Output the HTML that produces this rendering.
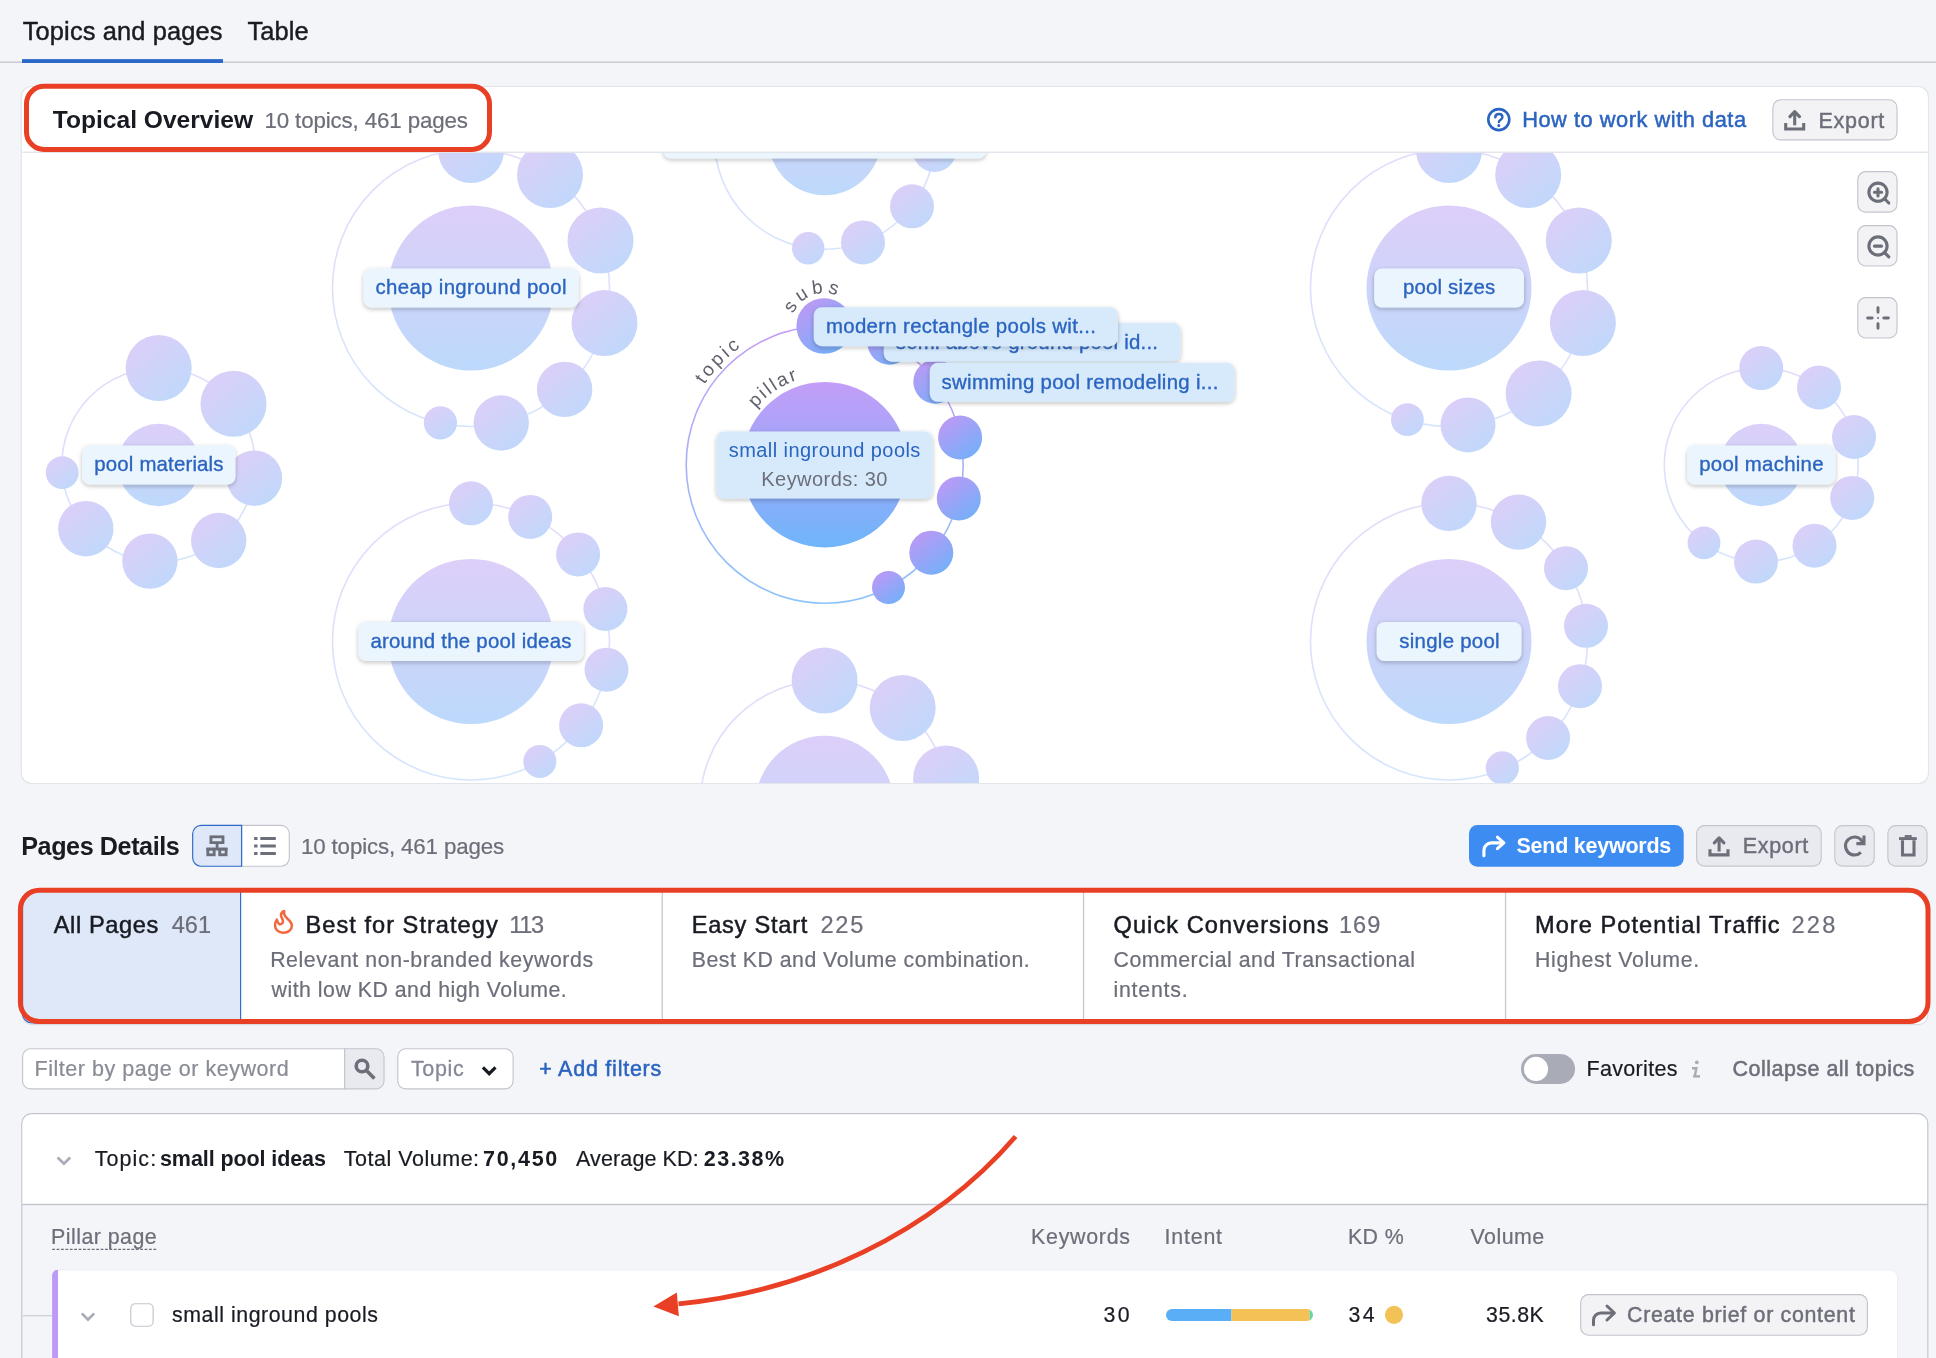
<!DOCTYPE html>
<html lang="en"><head><meta charset="utf-8"><title>Topics and pages</title>
<style>
html,body{margin:0;padding:0;}
body{background:#f4f5f9;font-family:"Liberation Sans",sans-serif;width:1936px;height:1358px;overflow:hidden;}
#page{position:relative;width:1936px;height:1358px;overflow:hidden;background:#f4f5f9;}
.abs{position:absolute;box-sizing:border-box;}
.t{position:absolute;white-space:pre;line-height:normal;font-family:"Liberation Sans",sans-serif;}
svg{position:absolute;overflow:visible;}
.chart{left:22px;top:153px;overflow:hidden;border-radius:0 0 10px 10px;will-change:transform;}

</style></head>
<body>
<div id="page">
<!-- tabs -->

<!-- overview card -->
<svg style="left:0;top:0" width="1936" height="1358" viewBox="0 0 1936 1358">
<rect x="0" y="61.5" width="1936" height="1.4" fill="#c4c7cf"/>
<rect x="22" y="59.1" width="201" height="3.9" fill="#2b68c8"/>
<path d="M31.70,86.50 H1918.10 A10.40,10.40 0 0 1 1928.50,96.90 V773.10 A10.40,10.40 0 0 1 1918.10,783.50 H31.70 A10.40,10.40 0 0 1 21.30,773.10 V96.90 A10.40,10.40 0 0 1 31.70,86.50 Z" fill="#fff" stroke="#e4e5eb" stroke-width="1.2" />
</svg>
<svg class="chart" width="1906" height="630" viewBox="22 153 1906 630" font-family="Liberation Sans, sans-serif">
<defs>
<linearGradient id="gMI" x1="0" y1="0" x2="0" y2="1"><stop offset="0" stop-color="#ddcff9"/><stop offset="1" stop-color="#bcd9fb"/></linearGradient>
<linearGradient id="gSI" x1="0.2" y1="0.1" x2="0.8" y2="0.9"><stop offset="0" stop-color="#dbcff8"/><stop offset="1" stop-color="#c1d8fb"/></linearGradient>
<linearGradient id="gOI" x1="0" y1="0" x2="0" y2="1"><stop offset="0" stop-color="#e3dcfb"/><stop offset="1" stop-color="#d6e5fc"/></linearGradient>
<linearGradient id="gMA" x1="0" y1="0" x2="0" y2="1"><stop offset="0" stop-color="#c39df8"/><stop offset="1" stop-color="#6fb5fa"/></linearGradient>
<linearGradient id="gSA" x1="0.2" y1="0.1" x2="0.8" y2="0.9"><stop offset="0" stop-color="#b99af5"/><stop offset="1" stop-color="#76aff9"/></linearGradient>
<linearGradient id="gOA" x1="0" y1="0" x2="0" y2="1"><stop offset="0" stop-color="#c39df8"/><stop offset="1" stop-color="#8cc4fa"/></linearGradient>
<filter id="sh" x="-10%" y="-30%" width="120%" height="170%"><feDropShadow dx="0" dy="1.5" stdDeviation="2" flood-color="#191b23" flood-opacity="0.28"/></filter>
</defs>
<circle cx="471" cy="288" r="138.5" fill="none" stroke="url(#gOI)" stroke-width="1.6"/>
<circle cx="471" cy="288" r="82.5" fill="url(#gMI)"/>
<circle cx="471" cy="150" r="33" fill="url(#gSI)"/>
<circle cx="550" cy="175" r="33" fill="url(#gSI)"/>
<circle cx="600.5" cy="240.5" r="33" fill="url(#gSI)"/>
<circle cx="604.5" cy="323" r="33" fill="url(#gSI)"/>
<circle cx="564.6" cy="389.4" r="27.7" fill="url(#gSI)"/>
<circle cx="501.2" cy="423" r="27.7" fill="url(#gSI)"/>
<circle cx="440.4" cy="422.8" r="16.6" fill="url(#gSI)"/>
<circle cx="158.5" cy="465" r="96.7" fill="none" stroke="url(#gOI)" stroke-width="1.6"/>
<circle cx="158.5" cy="465" r="41.2" fill="url(#gMI)"/>
<circle cx="158.7" cy="368.1" r="33" fill="url(#gSI)"/>
<circle cx="233.5" cy="403.8" r="33" fill="url(#gSI)"/>
<circle cx="254.4" cy="478.2" r="27.7" fill="url(#gSI)"/>
<circle cx="218.7" cy="540.5" r="27.7" fill="url(#gSI)"/>
<circle cx="149.9" cy="561.1" r="27.7" fill="url(#gSI)"/>
<circle cx="85.8" cy="528.7" r="27.7" fill="url(#gSI)"/>
<circle cx="62.2" cy="472.7" r="16.4" fill="url(#gSI)"/>
<circle cx="471" cy="641.5" r="138.5" fill="none" stroke="url(#gOI)" stroke-width="1.6"/>
<circle cx="471" cy="641.5" r="82.5" fill="url(#gMI)"/>
<circle cx="471" cy="503.3" r="22" fill="url(#gSI)"/>
<circle cx="530.2" cy="516.9" r="22" fill="url(#gSI)"/>
<circle cx="578.1" cy="554.4" r="22" fill="url(#gSI)"/>
<circle cx="605.4" cy="609" r="22" fill="url(#gSI)"/>
<circle cx="606.5" cy="669.7" r="22" fill="url(#gSI)"/>
<circle cx="581.1" cy="725.3" r="22" fill="url(#gSI)"/>
<circle cx="539.8" cy="761.4" r="16.5" fill="url(#gSI)"/>
<circle cx="824.7" cy="139" r="110.3" fill="none" stroke="url(#gOI)" stroke-width="1.6"/>
<circle cx="824.7" cy="139" r="56.2" fill="url(#gMI)"/>
<circle cx="808.2" cy="248.2" r="16.2" fill="url(#gSI)"/>
<circle cx="863" cy="242.4" r="22" fill="url(#gSI)"/>
<circle cx="912" cy="206.3" r="22" fill="url(#gSI)"/>
<circle cx="934.5" cy="149.9" r="22" fill="url(#gSI)"/>
<circle cx="824.65" cy="805" r="124.6" fill="none" stroke="url(#gOI)" stroke-width="1.6"/>
<circle cx="824.65" cy="805" r="69.3" fill="url(#gMI)"/>
<circle cx="824.6" cy="680.4" r="33" fill="url(#gSI)"/>
<circle cx="902.7" cy="708" r="33" fill="url(#gSI)"/>
<circle cx="946.1" cy="778.4" r="33" fill="url(#gSI)"/>
<circle cx="1449" cy="288" r="138.5" fill="none" stroke="url(#gOI)" stroke-width="1.6"/>
<circle cx="1449" cy="288" r="82.5" fill="url(#gMI)"/>
<circle cx="1449" cy="150" r="33" fill="url(#gSI)"/>
<circle cx="1528.2" cy="174.9" r="33" fill="url(#gSI)"/>
<circle cx="1578.8" cy="240.4" r="33" fill="url(#gSI)"/>
<circle cx="1582.9" cy="323.1" r="33" fill="url(#gSI)"/>
<circle cx="1538.6" cy="393.4" r="33" fill="url(#gSI)"/>
<circle cx="1468" cy="424.9" r="27.5" fill="url(#gSI)"/>
<circle cx="1407.4" cy="419.7" r="16.4" fill="url(#gSI)"/>
<circle cx="1761.2" cy="465" r="96.9" fill="none" stroke="url(#gOI)" stroke-width="1.6"/>
<circle cx="1761.2" cy="465" r="41.2" fill="url(#gMI)"/>
<circle cx="1761.2" cy="368.1" r="22" fill="url(#gSI)"/>
<circle cx="1819" cy="387.5" r="22" fill="url(#gSI)"/>
<circle cx="1854" cy="437" r="22" fill="url(#gSI)"/>
<circle cx="1852.2" cy="497.9" r="22" fill="url(#gSI)"/>
<circle cx="1814.5" cy="545.7" r="22" fill="url(#gSI)"/>
<circle cx="1756" cy="561.6" r="22" fill="url(#gSI)"/>
<circle cx="1704" cy="542.9" r="16.4" fill="url(#gSI)"/>
<circle cx="1449" cy="641.5" r="138.5" fill="none" stroke="url(#gOI)" stroke-width="1.6"/>
<circle cx="1449" cy="641.5" r="82.5" fill="url(#gMI)"/>
<circle cx="1449" cy="503.4" r="27.7" fill="url(#gSI)"/>
<circle cx="1518.5" cy="522.1" r="27.7" fill="url(#gSI)"/>
<circle cx="1566" cy="568.2" r="22" fill="url(#gSI)"/>
<circle cx="1586" cy="625.8" r="22" fill="url(#gSI)"/>
<circle cx="1580" cy="686.2" r="22" fill="url(#gSI)"/>
<circle cx="1548.1" cy="738" r="22" fill="url(#gSI)"/>
<circle cx="1502.3" cy="767.9" r="16.6" fill="url(#gSI)"/>
<circle cx="824.7" cy="464.7" r="138.5" fill="none" stroke="url(#gOA)" stroke-width="1.6"/>
<circle cx="824.7" cy="464.7" r="82.7" fill="url(#gMA)"/>
<circle cx="824.2" cy="326" r="27.8" fill="url(#gSA)"/>
<circle cx="889.4" cy="342.7" r="22" fill="url(#gSA)"/>
<circle cx="935.3" cy="381.7" r="22" fill="url(#gSA)"/>
<circle cx="960.1" cy="437.5" r="22" fill="url(#gSA)"/>
<circle cx="958.8" cy="498.4" r="22" fill="url(#gSA)"/>
<circle cx="931.3" cy="552.7" r="22" fill="url(#gSA)"/>
<circle cx="888.5" cy="587.5" r="16.5" fill="url(#gSA)"/>
<rect x="663.3" y="119.5" width="322.6" height="39" rx="8" fill="#ebf5fe" filter="url(#sh)"/>
<rect x="363.5" y="268.5" width="215.0" height="39" rx="8" fill="#ebf5fe" filter="url(#sh)"/><text x="375.5" y="294.4" font-size="20.4" fill="#2b64c0" stroke="#2b64c0" stroke-width="0.35" textLength="191.0" lengthAdjust="spacing">cheap inground pool</text>
<rect x="82.3" y="445.5" width="153.2" height="39" rx="8" fill="#ebf5fe" filter="url(#sh)"/><text x="94.3" y="471.4" font-size="20.4" fill="#2b64c0" stroke="#2b64c0" stroke-width="0.35" textLength="129.2" lengthAdjust="spacing">pool materials</text>
<rect x="358.4" y="622.0" width="225.1" height="39" rx="8" fill="#ebf5fe" filter="url(#sh)"/><text x="370.4" y="647.9" font-size="20.4" fill="#2b64c0" stroke="#2b64c0" stroke-width="0.35" textLength="201.1" lengthAdjust="spacing">around the pool ideas</text>
<rect x="1374.2" y="268.5" width="149.8" height="39" rx="8" fill="#ebf5fe" filter="url(#sh)"/><text x="1402.9" y="294.4" font-size="20.4" fill="#2b64c0" stroke="#2b64c0" stroke-width="0.35" textLength="92.4" lengthAdjust="spacing">pool sizes</text>
<rect x="1687.2" y="445.5" width="148.3" height="39" rx="8" fill="#ebf5fe" filter="url(#sh)"/><text x="1699.2" y="471.4" font-size="20.4" fill="#2b64c0" stroke="#2b64c0" stroke-width="0.35" textLength="124.3" lengthAdjust="spacing">pool machine</text>
<rect x="1376.7" y="622.0" width="144.8" height="39" rx="8" fill="#ebf5fe" filter="url(#sh)"/><text x="1399.3" y="647.9" font-size="20.4" fill="#2b64c0" stroke="#2b64c0" stroke-width="0.35" textLength="100.3" lengthAdjust="spacing">single pool</text>
<rect x="883.8" y="322.7" width="296.8" height="39" rx="8" fill="#d6eafc" filter="url(#sh)"/><text x="895.8" y="348.6" font-size="20.4" fill="#2b64c0" stroke="#2b64c0" stroke-width="0.35" textLength="262.2" lengthAdjust="spacing">semi above ground pool id...</text>
<rect x="813.8" y="307.2" width="304.2" height="39" rx="8" fill="#d6eafc" filter="url(#sh)"/><text x="825.9" y="333.1" font-size="20.4" fill="#2b64c0" stroke="#2b64c0" stroke-width="0.35" textLength="269.9" lengthAdjust="spacing">modern rectangle pools wit...</text>
<rect x="929.8" y="362.8" width="304.8" height="39" rx="8" fill="#d6eafc" filter="url(#sh)"/><text x="941.6" y="388.7" font-size="20.4" fill="#2b64c0" stroke="#2b64c0" stroke-width="0.35" textLength="276.7" lengthAdjust="spacing">swimming pool remodeling i...</text>
<rect x="716.5" y="431.5" width="216.1" height="67.1" rx="8" fill="#d6eafc" filter="url(#sh)"/>
<text x="728.8" y="456.7" font-size="20" fill="#2b64c0" textLength="191.5" lengthAdjust="spacing">small inground pools</text>
<text x="761.3" y="485.7" font-size="20" fill="#6c6e79" textLength="126.1" lengthAdjust="spacing">Keywords: 30</text>
<path id="pTopic" d="M695.95,399.10 A144.5,144.5 0 0 1 756.86,337.11" fill="none"/>
<path id="pPillar" d="M746.86,421.55 A89,89 0 0 1 815.40,376.19" fill="none"/>
<path id="pSubs" d="M791.70,320.27 A33,33 0 0 1 845.41,300.72" fill="none"/>
<text font-size="19" fill="#5f616d" letter-spacing="3"><textPath href="#pTopic" startOffset="50%" text-anchor="middle">topic</textPath></text>
<text font-size="19" fill="#5f616d" letter-spacing="2.2"><textPath href="#pPillar" startOffset="50%" text-anchor="middle">pillar</textPath></text>
<text font-size="19" fill="#5f616d" letter-spacing="4"><textPath href="#pSubs" startOffset="50%" text-anchor="middle">subs</textPath></text>
</svg>
<svg style="left:0;top:0" width="1936" height="1358" viewBox="0 0 1936 1358">
<rect x="22.5" y="151.6" width="1905" height="1.3" fill="#e1e2ea"/>
<path d="M1780.80,99.78 H1889.10 A7.92,7.92 0 0 1 1897.02,107.70 V132.00 A7.92,7.92 0 0 1 1889.10,139.93 H1780.80 A7.92,7.92 0 0 1 1772.88,132.00 V107.70 A7.92,7.92 0 0 1 1780.80,99.78 Z" fill="rgba(138,142,155,0.1)" stroke="#c3c5ce" stroke-width="1.15" />
<path d="M1865.70,171.67 H1889.10 A7.92,7.92 0 0 1 1897.02,179.60 V204.20 A7.92,7.92 0 0 1 1889.10,212.12 H1865.70 A7.92,7.92 0 0 1 1857.78,204.20 V179.60 A7.92,7.92 0 0 1 1865.70,171.67 Z" fill="rgba(138,142,155,0.1)" stroke="#c3c5ce" stroke-width="1.15" />
<path d="M1865.70,225.67 H1889.10 A7.92,7.92 0 0 1 1897.02,233.60 V258.10 A7.92,7.92 0 0 1 1889.10,266.03 H1865.70 A7.92,7.92 0 0 1 1857.78,258.10 V233.60 A7.92,7.92 0 0 1 1865.70,225.67 Z" fill="rgba(138,142,155,0.1)" stroke="#c3c5ce" stroke-width="1.15" />
<path d="M1865.70,297.68 H1889.10 A7.92,7.92 0 0 1 1897.02,305.60 V330.10 A7.92,7.92 0 0 1 1889.10,338.03 H1865.70 A7.92,7.92 0 0 1 1857.78,330.10 V305.60 A7.92,7.92 0 0 1 1865.70,297.68 Z" fill="rgba(138,142,155,0.1)" stroke="#c3c5ce" stroke-width="1.15" />
<path d="M1704.60,825.58 H1813.30 A7.92,7.92 0 0 1 1821.22,833.50 V858.20 A7.92,7.92 0 0 1 1813.30,866.12 H1704.60 A7.92,7.92 0 0 1 1696.67,858.20 V833.50 A7.92,7.92 0 0 1 1704.60,825.58 Z" fill="rgba(138,142,155,0.1)" stroke="#c3c5ce" stroke-width="1.15" />
<path d="M1842.70,825.58 H1866.30 A7.92,7.92 0 0 1 1874.22,833.50 V858.20 A7.92,7.92 0 0 1 1866.30,866.12 H1842.70 A7.92,7.92 0 0 1 1834.78,858.20 V833.50 A7.92,7.92 0 0 1 1842.70,825.58 Z" fill="rgba(138,142,155,0.1)" stroke="#c3c5ce" stroke-width="1.15" />
<path d="M1895.80,825.58 H1919.10 A7.92,7.92 0 0 1 1927.02,833.50 V858.20 A7.92,7.92 0 0 1 1919.10,866.12 H1895.80 A7.92,7.92 0 0 1 1887.88,858.20 V833.50 A7.92,7.92 0 0 1 1895.80,825.58 Z" fill="rgba(138,142,155,0.1)" stroke="#c3c5ce" stroke-width="1.15" />
<path d="M1477.50,824.90 H1675.20 A8.50,8.50 0 0 1 1683.70,833.40 V858.20 A8.50,8.50 0 0 1 1675.20,866.70 H1477.50 A8.50,8.50 0 0 1 1469.00,858.20 V833.40 A8.50,8.50 0 0 1 1477.50,824.90 Z" fill="#3c8cf2" />
<path d="M241.57,825.38 H280.90 A8.43,8.43 0 0 1 289.32,833.80 V857.80 A8.43,8.43 0 0 1 280.90,866.22 H241.57 V825.38 Z" fill="#fff" stroke="#c3c5ce" stroke-width="1.15" />
<path d="M201.10,825.38 H241.62 V866.22 H201.10 A8.43,8.43 0 0 1 192.67,857.80 V833.80 A8.43,8.43 0 0 1 201.10,825.38 Z" fill="#dfe8f8" stroke="#2b68c8" stroke-width="1.15" />
<path d="M31.60,891.20 H1918.40 A9.40,9.40 0 0 1 1927.80,900.60 V1015.20 A9.40,9.40 0 0 1 1918.40,1024.60 H31.60 A9.40,9.40 0 0 1 22.20,1015.20 V900.60 A9.40,9.40 0 0 1 31.60,891.20 Z" fill="#fff" stroke="#dcdee5" stroke-width="1.2" />
<path d="M32.00,891.18 H240.62 V1023.02 H32.00 A9.43,9.43 0 0 1 22.57,1013.60 V900.60 A9.43,9.43 0 0 1 32.00,891.18 Z" fill="#dfe8f8" stroke="#2b68c8" stroke-width="1.15" />
<rect x="661.6" y="892" width="1.3" height="132" fill="#c6c8d0"/>
<rect x="1082.9" y="892" width="1.3" height="132" fill="#c6c8d0"/>
<rect x="1504.9" y="892" width="1.3" height="132" fill="#c6c8d0"/>
<path d="M30.50,1048.78 H344.93 V1088.92 H30.50 A7.92,7.92 0 0 1 22.57,1081.00 V1056.70 A7.92,7.92 0 0 1 30.50,1048.78 Z" fill="#fff" stroke="#c3c5ce" stroke-width="1.15" />
<path d="M344.68,1048.78 H376.10 A7.92,7.92 0 0 1 384.03,1056.70 V1081.00 A7.92,7.92 0 0 1 376.10,1088.92 H344.68 V1048.78 Z" fill="#e9eaef" stroke="#c3c5ce" stroke-width="1.15" />
<path d="M405.70,1048.78 H505.20 A7.92,7.92 0 0 1 513.12,1056.70 V1081.00 A7.92,7.92 0 0 1 505.20,1088.92 H405.70 A7.92,7.92 0 0 1 397.77,1081.00 V1056.70 A7.92,7.92 0 0 1 405.70,1048.78 Z" fill="#fff" stroke="#c3c5ce" stroke-width="1.15" />
<path d="M1536.00,1053.90 H1560.00 A15.00,15.00 0 0 1 1575.00,1068.90 V1068.90 A15.00,15.00 0 0 1 1560.00,1083.90 H1536.00 A15.00,15.00 0 0 1 1521.00,1068.90 V1068.90 A15.00,15.00 0 0 1 1536.00,1053.90 Z" fill="#a9abb6" />
<circle cx="1536" cy="1068.95" r="12.1" fill="#fff"/>
<path d="M31.70,1113.58 H1917.90 A9.93,9.93 0 0 1 1927.83,1123.50 V1389.50 A9.93,9.93 0 0 1 1917.90,1399.42 H31.70 A9.93,9.93 0 0 1 21.77,1389.50 V1123.50 A9.93,9.93 0 0 1 31.70,1113.58 Z" fill="#f4f5f9" stroke="#c3c5ce" stroke-width="1.15" />
<path d="M31.80,1114.40 H1917.80 A9.20,9.20 0 0 1 1927.00,1123.60 V1204.00 H22.60 V1123.60 A9.20,9.20 0 0 1 31.80,1114.40 Z" fill="#fff" />
<rect x="22" y="1203.8" width="1905.6" height="1.4" fill="#c3c5ce"/>
<rect x="22.6" y="1315" width="30" height="1.3" fill="#cfd1d9"/>
<path d="M60.10,1269.90 H1890.00 A7.50,7.50 0 0 1 1897.50,1277.40 V1399.50 H52.60 V1277.40 A7.50,7.50 0 0 1 60.10,1269.90 Z" fill="#fff" stroke="#eceef3" stroke-width="1" />
<path d="M58.10,1269.40 H58.00 V1400.00 H52.10 V1275.40 A6.00,6.00 0 0 1 58.10,1269.40 Z" fill="#bc9af8" />
<path d="M135.20,1303.78 H148.70 A4.42,4.42 0 0 1 153.12,1308.20 V1321.80 A4.42,4.42 0 0 1 148.70,1326.22 H135.20 A4.42,4.42 0 0 1 130.77,1321.80 V1308.20 A4.42,4.42 0 0 1 135.20,1303.78 Z" fill="#fff" stroke="#c3c5ce" stroke-width="1.15" />
<path d="M52.2 1249.4H156.2" stroke="#6c6e79" stroke-width="1.3" stroke-dasharray="2.8 1.6" fill="none"/>
<clipPath id="ib"><rect x="1166" y="1309" width="147" height="12" rx="6"/></clipPath>
<g clip-path="url(#ib)"><rect x="1166" y="1309" width="65.5" height="12" fill="#5aaef5"/><rect x="1231.5" y="1309" width="78" height="12" fill="#f3c156"/><rect x="1309.5" y="1309" width="3.5" height="12" fill="#6dd3a0"/></g>
<circle cx="1394" cy="1314.9" r="9.1" fill="#f3c256"/>
<path d="M1588.60,1294.67 H1859.50 A7.92,7.92 0 0 1 1867.42,1302.60 V1327.30 A7.92,7.92 0 0 1 1859.50,1335.22 H1588.60 A7.92,7.92 0 0 1 1580.67,1327.30 V1302.60 A7.92,7.92 0 0 1 1588.60,1294.67 Z" fill="rgba(138,142,155,0.1)" stroke="#c3c5ce" stroke-width="1.15" />
<path d="M44.00,86.30 H472.00 A17.50,17.50 0 0 1 489.50,103.80 V131.90 A17.50,17.50 0 0 1 472.00,149.40 H44.00 A17.50,17.50 0 0 1 26.50,131.90 V103.80 A17.50,17.50 0 0 1 44.00,86.30 Z" fill="none" stroke="#e83f25" stroke-width="5" />
<path d="M39.40,890.30 H1909.00 A19.00,19.00 0 0 1 1928.00,909.30 V1002.50 A19.00,19.00 0 0 1 1909.00,1021.50 H39.40 A19.00,19.00 0 0 1 20.40,1002.50 V909.30 A19.00,19.00 0 0 1 39.40,890.30 Z" fill="none" stroke="#e83f25" stroke-width="5" />
</svg>
<!-- help icon -->
<!-- zoom buttons -->

<!-- pages details header -->

<!-- strategy tabs -->
<!-- flame -->

<!-- filters -->

<!-- table -->
<!-- intent bar -->

<!-- icons (page coordinates) -->
<svg style="left:0;top:0" width="1936" height="1358" viewBox="0 0 1936 1358" fill="none" stroke-linecap="round" stroke-linejoin="round">
<!-- help -->
<g stroke="#2b64c0"><circle cx="1498.8" cy="119.6" r="10.5" stroke-width="2.6"/><path d="M1495.3 117.3c0-2.1 1.6-3.4 3.6-3.4s3.5 1.3 3.5 3.1c0 1.7-1 2.3-2.1 3-.9.6-1.4 1-1.4 2.1" stroke-width="2.5"/><circle cx="1498.8" cy="125.6" r="1.5" fill="#2b64c0" stroke="none"/></g>
<!-- export (header) -->
<g stroke="#6c6e79" stroke-width="3.1" stroke-linecap="butt" stroke-linejoin="miter"><path d="M1785.7 123v6H1803.7v-6"/><path d="M1794.7 125.3V112.8"/><path d="M1789.9 116.6l4.8-4.9 4.8 4.9" stroke-linecap="round" stroke-linejoin="round"/></g>
<!-- zoom in / out / center -->
<g stroke="#6c6e79" stroke-width="3.1"><circle cx="1878" cy="192.2" r="9.1"/><path d="M1884.8 199l4 4M1874.4 192.3h7.2M1878 188.7v7.2"/>
<circle cx="1878" cy="246" r="9.1"/><path d="M1884.8 252.8l4 4M1874.4 246.1h7.2"/>
<path d="M1878 307.6v4.6M1878 323.6v4.6M1867.6 318h4.6M1883.8 318h4.6" stroke-width="2.9"/><circle cx="1878" cy="318" r="1" fill="#6c6e79" stroke="none"/></g>
<!-- hierarchy + list -->
<g stroke="#6c6e79" stroke-width="2.8" stroke-linecap="butt" stroke-linejoin="miter"><rect x="210.9" y="836.8" width="12.1" height="5.8"/><path d="M217.1 844v4.4M206.4 849.2h21.1"/><rect x="207.8" y="849.1" width="6.4" height="5.7"/><rect x="219.7" y="849.1" width="6.4" height="5.7"/>
<path d="M254.1 838.45h3.4M260.3 838.45h15.5M254.1 845.95h3.4M260.3 845.95h15.5M254.1 853.55h3.4M260.3 853.55h15.5" stroke-width="3.1"/></g>
<!-- send arrow -->
<g stroke="#fff" stroke-width="3.1"><path d="M1483.9 855.8v-5.4a7.5 7.5 0 0 1 7.5-7.5h11.6"/><path d="M1497.4 837.2l6.4 5.7-6.4 5.7"/></g>
<!-- export (details) -->
<g stroke="#6c6e79" stroke-width="3.1" stroke-linecap="butt" stroke-linejoin="miter"><path d="M1710 849.2v5.7H1728v-5.7"/><path d="M1719.1 851.5V839"/><path d="M1714.3 842.8l4.8-4.9 4.8 4.9" stroke-linecap="round" stroke-linejoin="round"/></g>
<!-- refresh -->
<g stroke="#6c6e79" stroke-width="3.1" stroke-linecap="butt" stroke-linejoin="miter"><path d="M1860.86 852.36A9 9 0 1 1 1861.59 840.46l1.9 2.3"/><path d="M1864 835.6v8h-7.6"/></g>
<!-- trash -->
<g stroke="#6c6e79" stroke-width="3.1" stroke-linecap="butt" stroke-linejoin="miter"><path d="M1902.5 840.2v14.8h11.5v-14.8"/><path d="M1899 838.6h17.8" stroke-width="2.9"/><path d="M1904.7 836.3h7" stroke-width="2.4"/></g>
<!-- flame -->
<path d="M284.2 911C283.5 914 285 916.5 287.2 918.5C290 921 291.9 923 291.9 925.6C291.9 929.8 288.3 932.8 283.4 932.8C278.6 932.8 275 929.6 275 925.3C275 923 275.7 921.2 276.8 919.6C277.2 921.5 278 923.2 279.4 924.2C281.5 924.6 283 923.2 283 921.3C283 919.5 281.3 917.8 281 915.4C280.8 913.5 282 912 284.2 911Z" stroke="#f0683b" stroke-width="2.5"/>
<!-- search -->
<g stroke="#6c6e79" stroke-width="3.6" stroke-linecap="butt"><circle cx="362" cy="1066" r="5.8"/><path d="M366.2 1070.2l8.2 8.2"/></g>
<!-- select chevron -->
<path d="M482.9 1067.3l6.3 6.4 6.3-6.4" stroke="#191b23" stroke-width="3.2" stroke-linecap="butt" stroke-linejoin="miter"/>
<!-- info i -->
<g stroke="#a9abb6" stroke-width="2.4" stroke-linecap="butt" stroke-linejoin="miter"><path d="M1692 1068.2h4.4l-1.7 8.2"/><path d="M1693.2 1076.4h6.8"/><circle cx="1696.8" cy="1062.3" r="1.85" fill="#a9abb6" stroke="none"/></g>
<!-- table chevrons -->
<g stroke="#a9abb6" stroke-width="2.7" stroke-linecap="butt" stroke-linejoin="miter"><path d="M57.6 1157.5l6.3 6.1 6.3-6.1"/><path d="M81.8 1313.4l6.2 6.2 6.2-6.2"/></g>
<!-- create brief arrow -->
<g stroke="#6c6e79" stroke-width="3"><path d="M1593.5 1324.8v-4.6a7.2 7.2 0 0 1 7.2-7.2h12.8"/><path d="M1607 1306l7.4 7-7.4 7"/></g>
</svg>
<!-- red arrow annotation -->
<svg style="left:0;top:0" width="1936" height="1358" viewBox="0 0 1936 1358"><path d="M1015.6 1136.5 C 931.3 1234.1, 805.7 1291.5, 678.5 1303.9" fill="none" stroke="#e83f25" stroke-width="4.8"/><path d="M653.4 1306.6 L676.8 1292.5 L678.9 1316.3 Z" fill="#e83f25"/></svg>

<div class="abs" id="texts" style="left:0;top:0;width:1936px;height:1358px;will-change:transform;"><span class="t" style="left:22.72px;top:17.30px;font-size:25.4px;font-weight:400;color:#191b23;letter-spacing:0.145px;-webkit-text-stroke:0.45px #191b23;">Topics and pages</span>
<span class="t" style="left:247.52px;top:17.30px;font-size:25.4px;font-weight:400;color:#191b23;letter-spacing:0.084px;-webkit-text-stroke:0.45px #191b23;">Table</span>
<span class="t" style="left:52.81px;top:105.80px;font-size:24.6px;font-weight:700;color:#191b23;letter-spacing:-0.012px;">Topical Overview</span>
<span class="t" style="left:264.49px;top:107.60px;font-size:22.3px;font-weight:400;color:#6c6e79;letter-spacing:-0.123px;-webkit-text-stroke:0.22px #6c6e79;">10 topics, 461 pages</span>
<span class="t" style="left:1522.15px;top:107.30px;font-size:21.8px;font-weight:400;color:#2b64c0;letter-spacing:0.534px;-webkit-text-stroke:0.5px #2b64c0;">How to work with data</span>
<span class="t" style="left:1818.44px;top:108.60px;font-size:21.5px;font-weight:400;color:#6c6e79;letter-spacing:0.750px;-webkit-text-stroke:0.45px #6c6e79;">Export</span>
<span class="t" style="left:21.20px;top:831.50px;font-size:25.2px;font-weight:700;color:#191b23;letter-spacing:-0.430px;">Pages Details</span>
<span class="t" style="left:300.99px;top:833.50px;font-size:22.3px;font-weight:400;color:#6c6e79;letter-spacing:-0.139px;-webkit-text-stroke:0.22px #6c6e79;">10 topics, 461 pages</span>
<span class="t" style="left:1516.51px;top:834.30px;font-size:21.5px;font-weight:700;color:#ffffff;letter-spacing:-0.250px;">Send keywords</span>
<span class="t" style="left:1742.74px;top:834.30px;font-size:21.5px;font-weight:400;color:#6c6e79;letter-spacing:0.690px;-webkit-text-stroke:0.45px #6c6e79;">Export</span>
<span class="t" style="left:53.70px;top:911.50px;font-size:23.6px;font-weight:400;color:#191b23;letter-spacing:0.625px;-webkit-text-stroke:0.5px #191b23;">All Pages</span>
<span class="t" style="left:171.65px;top:911.50px;font-size:23.6px;font-weight:400;color:#6c6e79;letter-spacing:0.070px;-webkit-text-stroke:0.22px #6c6e79;">461</span>
<span class="t" style="left:305.46px;top:911.50px;font-size:23.6px;font-weight:400;color:#191b23;letter-spacing:1.034px;-webkit-text-stroke:0.5px #191b23;">Best for Strategy</span>
<span class="t" style="left:509.19px;top:911.50px;font-size:23.6px;font-weight:400;color:#6c6e79;letter-spacing:-1.335px;-webkit-text-stroke:0.22px #6c6e79;">113</span>
<span class="t" style="left:270.14px;top:947.80px;font-size:21.3px;font-weight:400;color:#6c6e79;letter-spacing:0.584px;-webkit-text-stroke:0.22px #6c6e79;">Relevant non-branded keywords</span>
<span class="t" style="left:271.60px;top:977.70px;font-size:21.3px;font-weight:400;color:#6c6e79;letter-spacing:0.497px;-webkit-text-stroke:0.22px #6c6e79;">with low KD and high Volume.</span>
<span class="t" style="left:691.66px;top:911.50px;font-size:23.6px;font-weight:400;color:#191b23;letter-spacing:0.760px;-webkit-text-stroke:0.5px #191b23;">Easy Start</span>
<span class="t" style="left:820.50px;top:911.50px;font-size:23.6px;font-weight:400;color:#6c6e79;letter-spacing:1.742px;-webkit-text-stroke:0.22px #6c6e79;">225</span>
<span class="t" style="left:691.74px;top:947.80px;font-size:21.3px;font-weight:400;color:#6c6e79;letter-spacing:0.492px;-webkit-text-stroke:0.22px #6c6e79;">Best KD and Volume combination.</span>
<span class="t" style="left:1113.50px;top:911.50px;font-size:23.6px;font-weight:400;color:#191b23;letter-spacing:1.058px;-webkit-text-stroke:0.5px #191b23;">Quick Conversions</span>
<span class="t" style="left:1338.99px;top:911.50px;font-size:23.6px;font-weight:400;color:#6c6e79;letter-spacing:1.003px;-webkit-text-stroke:0.22px #6c6e79;">169</span>
<span class="t" style="left:1113.50px;top:947.80px;font-size:21.3px;font-weight:400;color:#6c6e79;letter-spacing:0.515px;-webkit-text-stroke:0.22px #6c6e79;">Commercial and Transactional</span>
<span class="t" style="left:1113.42px;top:977.70px;font-size:21.3px;font-weight:400;color:#6c6e79;letter-spacing:0.798px;-webkit-text-stroke:0.22px #6c6e79;">intents.</span>
<span class="t" style="left:1534.96px;top:911.50px;font-size:23.6px;font-weight:400;color:#191b23;letter-spacing:1.050px;-webkit-text-stroke:0.5px #191b23;">More Potential Traffic</span>
<span class="t" style="left:1791.50px;top:911.50px;font-size:23.6px;font-weight:400;color:#6c6e79;letter-spacing:2.217px;-webkit-text-stroke:0.22px #6c6e79;">228</span>
<span class="t" style="left:1535.04px;top:947.80px;font-size:21.3px;font-weight:400;color:#6c6e79;letter-spacing:0.640px;-webkit-text-stroke:0.22px #6c6e79;">Highest Volume.</span>
<span class="t" style="left:34.53px;top:1056.90px;font-size:21.5px;font-weight:400;color:#898b95;letter-spacing:0.530px;-webkit-text-stroke:0.22px #898b95;">Filter by page or keyword</span>
<span class="t" style="left:410.90px;top:1056.90px;font-size:21.5px;font-weight:400;color:#858896;letter-spacing:0.662px;-webkit-text-stroke:0.3px #858896;">Topic</span>
<span class="t" style="left:539.27px;top:1056.90px;font-size:21.5px;font-weight:400;color:#2b64c0;letter-spacing:0.756px;-webkit-text-stroke:0.5px #2b64c0;">+ Add filters</span>
<span class="t" style="left:1586.53px;top:1056.90px;font-size:21.5px;font-weight:400;color:#191b23;letter-spacing:0.316px;-webkit-text-stroke:0.22px #191b23;">Favorites</span>
<span class="t" style="left:1732.50px;top:1056.90px;font-size:21.5px;font-weight:400;color:#6c6e79;letter-spacing:0.477px;-webkit-text-stroke:0.5px #6c6e79;">Collapse all topics</span>
<span class="t" style="left:94.80px;top:1146.80px;font-size:21.5px;font-weight:400;color:#191b23;letter-spacing:1.029px;-webkit-text-stroke:0.22px #191b23;">Topic:</span>
<span class="t" style="left:160.00px;top:1146.80px;font-size:21.5px;font-weight:700;color:#191b23;letter-spacing:-0.091px;">small pool ideas</span>
<span class="t" style="left:343.80px;top:1146.80px;font-size:21.5px;font-weight:400;color:#191b23;letter-spacing:0.517px;-webkit-text-stroke:0.22px #191b23;">Total Volume:</span>
<span class="t" style="left:483.00px;top:1146.80px;font-size:21.5px;font-weight:700;color:#191b23;letter-spacing:1.700px;">70,450</span>
<span class="t" style="left:576.00px;top:1146.80px;font-size:21.5px;font-weight:400;color:#191b23;letter-spacing:0.120px;-webkit-text-stroke:0.22px #191b23;">Average KD:</span>
<span class="t" style="left:703.83px;top:1146.80px;font-size:21.5px;font-weight:700;color:#191b23;letter-spacing:1.467px;">23.38%</span>
<span class="t" style="left:51.04px;top:1225.00px;font-size:21.4px;font-weight:400;color:#6c6e79;letter-spacing:0.456px;-webkit-text-stroke:0.22px #6c6e79;">Pillar page</span>
<span class="t" style="left:1031.04px;top:1225.00px;font-size:21.4px;font-weight:400;color:#6c6e79;letter-spacing:0.721px;-webkit-text-stroke:0.22px #6c6e79;">Keywords</span>
<span class="t" style="left:1164.50px;top:1225.00px;font-size:21.4px;font-weight:400;color:#6c6e79;letter-spacing:0.804px;-webkit-text-stroke:0.22px #6c6e79;">Intent</span>
<span class="t" style="left:1348.04px;top:1225.00px;font-size:21.4px;font-weight:400;color:#6c6e79;letter-spacing:0.320px;-webkit-text-stroke:0.22px #6c6e79;">KD %</span>
<span class="t" style="left:1470.50px;top:1225.00px;font-size:21.4px;font-weight:400;color:#6c6e79;letter-spacing:0.469px;-webkit-text-stroke:0.22px #6c6e79;">Volume</span>
<span class="t" style="left:171.99px;top:1302.80px;font-size:21.3px;font-weight:400;color:#191b23;letter-spacing:0.560px;-webkit-text-stroke:0.22px #191b23;">small inground pools</span>
<span class="t" style="left:1103.50px;top:1302.80px;font-size:21.3px;font-weight:400;color:#191b23;letter-spacing:2.500px;-webkit-text-stroke:0.22px #191b23;">30</span>
<span class="t" style="left:1348.50px;top:1302.80px;font-size:21.3px;font-weight:400;color:#191b23;letter-spacing:2.500px;-webkit-text-stroke:0.22px #191b23;">34</span>
<span class="t" style="left:1486.00px;top:1302.80px;font-size:21.3px;font-weight:400;color:#191b23;letter-spacing:0.535px;-webkit-text-stroke:0.22px #191b23;">35.8K</span>
<span class="t" style="left:1627.00px;top:1302.80px;font-size:21.4px;font-weight:400;color:#6c6e79;letter-spacing:0.682px;-webkit-text-stroke:0.45px #6c6e79;">Create brief or content</span></div>

</div>
</body></html>
